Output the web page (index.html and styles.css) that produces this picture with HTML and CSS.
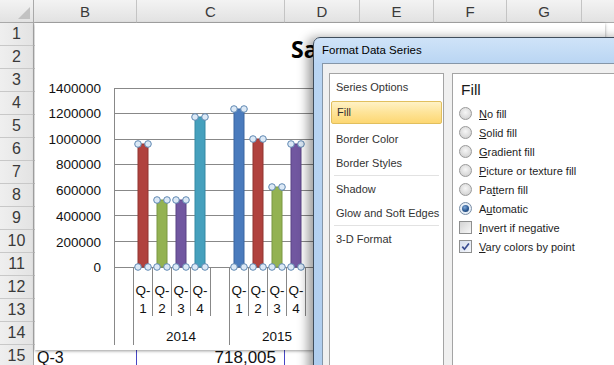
FILE: index.html
```html
<!DOCTYPE html>
<html>
<head>
<meta charset="utf-8">
<title>Format Data Series</title>
<link rel="stylesheet" href="styles.css">
</head>
<body>
<div class="app">
  <div class="sheet">
    <div class="corner"></div>
    <div class="ch">B</div><div class="ch">C</div><div class="ch">D</div><div class="ch">E</div><div class="ch">F</div><div class="ch">G</div><div class="ch"></div>

    <div class="rh">1</div><div class="c rb"></div><div class="c rb"></div><div class="c"></div><div class="c"></div><div class="c"></div><div class="c"></div><div class="c"></div>
    <div class="rh">2</div><div class="c rb"></div><div class="c rb"></div><div class="c"></div><div class="c"></div><div class="c"></div><div class="c"></div><div class="c"></div>
    <div class="rh">3</div><div class="c rb"></div><div class="c rb"></div><div class="c"></div><div class="c"></div><div class="c"></div><div class="c"></div><div class="c"></div>
    <div class="rh">4</div><div class="c rb"></div><div class="c rb"></div><div class="c"></div><div class="c"></div><div class="c"></div><div class="c"></div><div class="c"></div>
    <div class="rh">5</div><div class="c rb"></div><div class="c rb"></div><div class="c"></div><div class="c"></div><div class="c"></div><div class="c"></div><div class="c"></div>
    <div class="rh">6</div><div class="c rb"></div><div class="c rb"></div><div class="c"></div><div class="c"></div><div class="c"></div><div class="c"></div><div class="c"></div>
    <div class="rh">7</div><div class="c rb"></div><div class="c rb"></div><div class="c"></div><div class="c"></div><div class="c"></div><div class="c"></div><div class="c"></div>
    <div class="rh">8</div><div class="c rb"></div><div class="c rb"></div><div class="c"></div><div class="c"></div><div class="c"></div><div class="c"></div><div class="c"></div>
    <div class="rh">9</div><div class="c rb"></div><div class="c rb"></div><div class="c"></div><div class="c"></div><div class="c"></div><div class="c"></div><div class="c"></div>
    <div class="rh">10</div><div class="c rb"></div><div class="c rb"></div><div class="c"></div><div class="c"></div><div class="c"></div><div class="c"></div><div class="c"></div>
    <div class="rh">11</div><div class="c rb"></div><div class="c rb"></div><div class="c"></div><div class="c"></div><div class="c"></div><div class="c"></div><div class="c"></div>
    <div class="rh">12</div><div class="c rb"></div><div class="c rb"></div><div class="c"></div><div class="c"></div><div class="c"></div><div class="c"></div><div class="c"></div>
    <div class="rh">13</div><div class="c rb"></div><div class="c rb"></div><div class="c"></div><div class="c"></div><div class="c"></div><div class="c"></div><div class="c"></div>
    <div class="rh">14</div><div class="c rb"></div><div class="c rb"></div><div class="c"></div><div class="c"></div><div class="c"></div><div class="c"></div><div class="c"></div>
    <div class="rh">15</div><div class="c rb low">Q-3</div><div class="c rb num low">718,005</div><div class="c"></div><div class="c"></div><div class="c"></div><div class="c"></div><div class="c"></div>
  </div>

  <div class="chart">
    <svg width="570" height="327" viewBox="35 23 570 327" xmlns="http://www.w3.org/2000/svg">
      <text class="ttl" x="291" y="58">Sales</text>
      <g class="grid">
        <line x1="114" y1="88.5" x2="605" y2="88.5"/>
        <line x1="114" y1="113.5" x2="605" y2="113.5"/>
        <line x1="114" y1="139.5" x2="605" y2="139.5"/>
        <line x1="114" y1="164.5" x2="605" y2="164.5"/>
        <line x1="114" y1="190.5" x2="605" y2="190.5"/>
        <line x1="114" y1="215.5" x2="605" y2="215.5"/>
        <line x1="114" y1="241.5" x2="605" y2="241.5"/>
        <line x1="114" y1="267.5" x2="605" y2="267.5"/>
        <line x1="114.5" y1="88" x2="114.5" y2="345"/>
        <line x1="133.5" y1="267" x2="133.5" y2="345"/>
        <line x1="229.5" y1="267" x2="229.5" y2="345"/>
        <line x1="152.5" y1="267" x2="152.5" y2="316"/>
        <line x1="171.5" y1="267" x2="171.5" y2="316"/>
        <line x1="190.5" y1="267" x2="190.5" y2="316"/>
        <line x1="210.5" y1="267" x2="210.5" y2="316"/>
        <line x1="248.5" y1="267" x2="248.5" y2="316"/>
        <line x1="267.5" y1="267" x2="267.5" y2="316"/>
        <line x1="286.5" y1="267" x2="286.5" y2="316"/>
        <line x1="305.5" y1="267" x2="305.5" y2="316"/>
      </g>
      <g class="ax" text-anchor="end">
        <text x="101" y="93">1400000</text>
        <text x="101" y="118">1200000</text>
        <text x="101" y="144">1000000</text>
        <text x="101" y="169">800000</text>
        <text x="101" y="195">600000</text>
        <text x="101" y="221">400000</text>
        <text x="101" y="247">200000</text>
        <text x="101" y="272">0</text>
      </g>
      <g class="bars">
        <rect class="red" x="138" y="144" width="10" height="123"/>
        <rect class="green" x="157" y="200" width="10" height="67"/>
        <rect class="purple" x="176" y="200" width="10" height="67"/>
        <rect class="teal" x="195" y="117" width="10" height="150"/>
        <rect class="blue" x="234" y="109" width="10" height="158"/>
        <rect class="red" x="253" y="139" width="10" height="128"/>
        <rect class="green" x="272" y="187" width="10" height="80"/>
        <rect class="purple" x="291" y="144" width="10" height="123"/>
      </g>
      <g class="handles">
        <circle cx="138" cy="144" r="3.3"/><circle cx="148" cy="144" r="3.3"/>
        <circle cx="157" cy="200" r="3.3"/><circle cx="167" cy="200" r="3.3"/>
        <circle cx="176" cy="200" r="3.3"/><circle cx="186" cy="200" r="3.3"/>
        <circle cx="195" cy="117" r="3.3"/><circle cx="205" cy="117" r="3.3"/>
        <circle cx="234" cy="109" r="3.3"/><circle cx="244" cy="109" r="3.3"/>
        <circle cx="253" cy="139" r="3.3"/><circle cx="263" cy="139" r="3.3"/>
        <circle cx="272" cy="187" r="3.3"/><circle cx="282" cy="187" r="3.3"/>
        <circle cx="291" cy="144" r="3.3"/><circle cx="301" cy="144" r="3.3"/>
        <circle cx="138" cy="267" r="3.3"/><circle cx="148" cy="267" r="3.3"/>
        <circle cx="157" cy="267" r="3.3"/><circle cx="167" cy="267" r="3.3"/>
        <circle cx="176" cy="267" r="3.3"/><circle cx="186" cy="267" r="3.3"/>
        <circle cx="195" cy="267" r="3.3"/><circle cx="205" cy="267" r="3.3"/>
        <circle cx="234" cy="267" r="3.3"/><circle cx="244" cy="267" r="3.3"/>
        <circle cx="253" cy="267" r="3.3"/><circle cx="263" cy="267" r="3.3"/>
        <circle cx="272" cy="267" r="3.3"/><circle cx="282" cy="267" r="3.3"/>
        <circle cx="291" cy="267" r="3.3"/><circle cx="301" cy="267" r="3.3"/>
      </g>
      <g class="ax" text-anchor="middle">
        <text x="143" y="295">Q-</text><text x="143" y="313">1</text>
        <text x="162" y="295">Q-</text><text x="162" y="313">2</text>
        <text x="181" y="295">Q-</text><text x="181" y="313">3</text>
        <text x="200" y="295">Q-</text><text x="200" y="313">4</text>
        <text x="239" y="295">Q-</text><text x="239" y="313">1</text>
        <text x="258" y="295">Q-</text><text x="258" y="313">2</text>
        <text x="277" y="295">Q-</text><text x="277" y="313">3</text>
        <text x="296" y="295">Q-</text><text x="296" y="313">4</text>
        <text x="181" y="341">2014</text>
        <text x="277" y="341">2015</text>
      </g>
    </svg>
  </div>

  <div class="dialog">
    <div class="titlebar">Format Data Series</div>
    <div class="client">
      <ul class="nav">
        <li class="item">Series Options</li>
        <li class="gap"></li>
        <li class="item active">Fill</li>
        <li class="item">Border Color</li>
        <li class="item">Border Styles</li>
        <li class="sep"></li>
        <li class="item">Shadow</li>
        <li class="item">Glow and Soft Edges</li>
        <li class="sep"></li>
        <li class="item">3-D Format</li>
      </ul>
      <div class="pane">
        <div class="pane-title">Fill</div>
        <div class="opt"><span class="radio"></span><span><u>N</u>o fill</span></div>
        <div class="opt"><span class="radio"></span><span><u>S</u>olid fill</span></div>
        <div class="opt"><span class="radio"></span><span><u>G</u>radient fill</span></div>
        <div class="opt"><span class="radio"></span><span><u>P</u>icture or texture fill</span></div>
        <div class="opt"><span class="radio"></span><span>Pa<u>t</u>tern fill</span></div>
        <div class="opt"><span class="radio on"></span><span>A<u>u</u>tomatic</span></div>
        <div class="opt"><span class="check"></span><span><u>I</u>nvert if negative</span></div>
        <div class="opt"><span class="check on"><svg width="11" height="11" viewBox="0 0 11 11"><path d="M2.3 5.6 L4.5 8.2 L8.9 2.4" fill="none" stroke="#3a4d92" stroke-width="1.7"/></svg></span><span><u>V</u>ary colors by point</span></div>
      </div>
    </div>
  </div>
</div>
</body>
</html>
```

FILE: styles.css
```css
html, body {
  margin: 0;
  padding: 0;
}
body {
  width: 614px;
  height: 365px;
  overflow: hidden;
  background: #fff;
  font-family: "Liberation Sans", Arial, sans-serif;
}
.app {
  position: relative;
  width: 614px;
  height: 365px;
  overflow: hidden;
}

/* spreadsheet grid */
.sheet {
  display: grid;
  grid-template-columns: 34px 103px 148px 75px 74px 73px 75px 80px;
  grid-auto-rows: 23px;
  width: 662px;
}
.corner, .ch, .rh {
  box-sizing: border-box;
  color: #3a3a3a;
  display: flex;
  align-items: center;
  justify-content: center;
}
.corner {
  position: relative;
  background: linear-gradient(#f3f3f3, #e2e2e2);
  border-right: 1px solid #a9a9a9;
  border-bottom: 1px solid #a9a9a9;
}
.corner::after {
  content: "";
  position: absolute;
  right: 3px;
  bottom: 3px;
  border-style: solid;
  border-width: 0 0 12px 12px;
  border-color: transparent transparent #c2c2c2 transparent;
}
.ch {
  font-size: 15px;
  background: linear-gradient(#f3f3f3, #e2e2e2);
  border-right: 1px solid #c4c4c4;
  border-bottom: 1px solid #a9a9a9;
}
.rh {
  font-size: 16px;
  background: linear-gradient(90deg, #efefef, #e3e3e3);
  border-right: 1px solid #a9a9a9;
  border-bottom: 1px solid #c8c8c8;
}
.c {
  box-sizing: border-box;
  border-right: 1px solid #d9d9d9;
  border-bottom: 1px solid #d9d9d9;
  font-size: 16px;
  color: #111;
  display: flex;
  align-items: center;
  padding: 0 3px;
  white-space: nowrap;
  overflow: hidden;
}
.c.low {
  padding-top: 3px;
}
.c.rb {
  border-right-color: #4747c4;
}
.c.num {
  justify-content: flex-end;
  padding-right: 8px;
  font-size: 17px;
}

/* chart object */
.chart {
  position: absolute;
  left: 35px;
  top: 23px;
  width: 570px;
  height: 327px;
  background: #fff;
  box-shadow: 0 1px 3px rgba(0, 0, 0, 0.4);
}
.chart svg {
  display: block;
}
.ttl {
  font-family: "Open Sans", "Liberation Sans", sans-serif;
  font-weight: 700;
  font-size: 23px;
  fill: #000;
}
.grid line {
  stroke: #888;
  stroke-width: 1;
}
.ax {
  font-family: "Liberation Sans", Arial, sans-serif;
  font-size: 13.5px;
  fill: #111;
}
.bars rect {
  stroke-width: 1;
}
.red { fill: #b0423e; stroke: #913431; }
.green { fill: #93b252; stroke: #7a9842; }
.purple { fill: #7157a0; stroke: #5b4585; }
.teal { fill: #45a0bd; stroke: #3689a3; }
.blue { fill: #4a7bbd; stroke: #3a66a1; }
.handles circle {
  fill: #dce9f6;
  stroke: #5f88b2;
  stroke-width: 1;
}

/* dialog window */
.dialog {
  position: absolute;
  left: 313px;
  top: 37px;
  width: 330px;
  height: 345px;
  box-sizing: border-box;
  border: 1px solid #3f4d5c;
  border-radius: 7px 7px 0 0;
  background: linear-gradient(#cfe3f8 0, #b9d5f3 26px, #afcdee 100%);
  box-shadow: -5px 1px 11px rgba(0, 0, 0, 0.4);
  padding: 0 8px;
  display: flex;
  flex-direction: column;
  font-family: "Liberation Sans", Arial, sans-serif;
}
.titlebar {
  height: 25px;
  line-height: 25px;
  font-size: 11.5px;
  color: #000;
  white-space: nowrap;
}
.client {
  flex: 1;
  border: 1px solid #8596a8;
  background: #f0f0f0;
  display: flex;
  gap: 8px;
  padding: 9px 0 0 6px;
}
.nav {
  list-style: none;
  margin: 0;
  padding: 1px 0 0;
  width: 113px;
  flex: none;
  border: 1px solid #a4a4a4;
  background: #fff;
}
.item {
  height: 24px;
  line-height: 24px;
  font-size: 11px;
  color: #333;
  padding-left: 6px;
  white-space: nowrap;
}
.item.active {
  box-sizing: border-box;
  height: 23px;
  line-height: 21px;
  margin: 0 1px 3px;
  padding-left: 5px;
  border: 1px solid #e1bf5e;
  border-radius: 2px;
  background: linear-gradient(#fff2c6, #fee59c 45%, #fdd772);
}
.gap {
  height: 2px;
}
.sep {
  height: 1px;
  margin: 0 4px 1px;
  background: #e2e2e2;
}
.pane {
  flex: 1;
  border: 1px solid #a4a4a4;
  background: #fff;
  padding-top: 5px;
}
.pane-title {
  font-size: 15.5px;
  line-height: 22px;
  padding-left: 8px;
  color: #1a1a1a;
  margin-bottom: 3px;
}
.opt {
  height: 19px;
  display: flex;
  align-items: center;
  gap: 7px;
  padding-left: 6px;
  font-size: 11px;
  color: #1e1e1e;
  white-space: nowrap;
}
.radio {
  position: relative;
  flex: none;
  width: 13px;
  height: 13px;
  box-sizing: border-box;
  border-radius: 50%;
  border: 1px solid #9a9a9a;
  background: radial-gradient(circle at 50% 40%, #f6f6f6 0, #dedede 55%, #c8c8c8 100%);
}
.radio.on {
  background: radial-gradient(circle at 50% 45%, #f4f8fc 0, #dbe6f2 100%);
  border-color: #7a8ea6;
}
.radio.on::after {
  content: "";
  position: absolute;
  left: 2px;
  top: 2px;
  width: 7px;
  height: 7px;
  border-radius: 50%;
  background: radial-gradient(circle at 40% 35%, #7fa9d9 0, #2a5892 55%, #173a66 100%);
}
.check {
  flex: none;
  width: 13px;
  height: 13px;
  box-sizing: border-box;
  border: 1px solid #8e8f8f;
  background: linear-gradient(135deg, #d3d3d3, #f7f7f7);
}
.check.on {
  background: linear-gradient(135deg, #d4dcec, #f6f8fc);
}
.check svg {
  display: block;
}
```
